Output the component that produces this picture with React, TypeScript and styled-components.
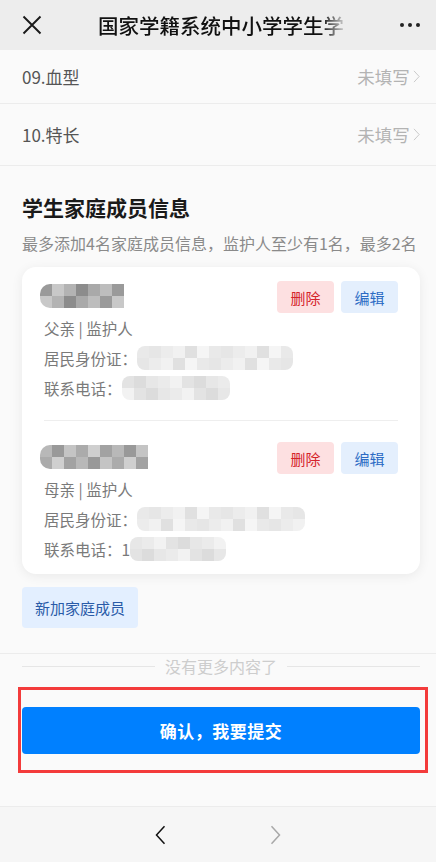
import styled, { createGlobalStyle } from "styled-components";

const GlobalStyle = createGlobalStyle`
  * { box-sizing: border-box; }
  html, body { margin: 0; padding: 0; }
  body {
    font-family: "Noto Sans CJK SC", "Noto Sans", sans-serif;
    background: #fafafa;
    color: #222;
  }
`;

type MosaicProps = { cols: number; rows: number; cell: number; shades: string[]; seed: number };

function Mosaic({ cols, rows, cell, shades, seed }: MosaicProps) {
  const cells = [];
  let s = seed;
  for (let r = 0; r < rows; r++) {
    for (let c = 0; c < cols; c++) {
      s = (s * 9301 + 49297) % 233280;
      const shade = shades[s % shades.length];
      cells.push(<rect key={`${r}-${c}`} x={c * cell} y={r * cell} width={cell} height={cell} fill={shade} />);
    }
  }
  return (
    <MosaicSvg width={cols * cell} height={rows * cell} viewBox={`0 0 ${cols * cell} ${rows * cell}`}>
      {cells}
    </MosaicSvg>
  );
}

const Chevron = ({ color, size = 12, dir = "right" }: { color: string; size?: number; dir?: "left" | "right" }) => (
  <svg width={size * 0.55} height={size} viewBox="0 0 6 12" fill="none">
    <path
      d={dir === "right" ? "M0.6 0.8 L5.4 6 L0.6 11.2" : "M5.4 0.8 L0.6 6 L5.4 11.2"}
      stroke={color}
      strokeWidth="0.9"
    />
  </svg>
);

const members = [
  {
    nameCols: 7, nameShades: ["#a9a9a9", "#bdbdbd", "#9a9a9a", "#c8c8c8", "#b3b3b3", "#8c8c8c"],
    relation: "父亲 | 监护人", phonePrefix: "", seed: 7, idCols: 13, phoneCols: 9,
  },
  {
    nameCols: 9, nameShades: ["#cfcfcf", "#a2a2a2", "#b8b8b8", "#999", "#c4c4c4", "#ababab"],
    relation: "母亲 | 监护人", phonePrefix: "1", seed: 31, idCols: 14, phoneCols: 8,
  },
];

const idShades = ["#e6e6e6", "#ececec", "#f1f1f1", "#e0e0e0", "#f5f5f5", "#e9e9e9"];
const phoneShades = ["#e3e3e3", "#ebebeb", "#dcdcdc", "#f2f2f2", "#e7e7e7"];

export default function App() {
  return (
    <>
      <GlobalStyle />
      <Page>
        <TopBar>
          <IconSlot>
            <svg width="20" height="20" viewBox="0 0 20 20">
              <path d="M1.5 1.5 L18.5 18.5 M18.5 1.5 L1.5 18.5" stroke="#1a1a1a" strokeWidth="1.9" />
            </svg>
          </IconSlot>
          <Title>国家学籍系统中小学学生学</Title>
          <Dots>
            <i /><i /><i />
          </Dots>
        </TopBar>

        <Content>
          <FieldRow $h={54}>
            <FieldLabel>09.血型</FieldLabel>
            <FieldValue>未填写<Chevron color="#c8c8c8" size={13} /></FieldValue>
          </FieldRow>
          <FieldRow $h={62}>
            <FieldLabel>10.特长</FieldLabel>
            <FieldValue>未填写<Chevron color="#c8c8c8" size={13} /></FieldValue>
          </FieldRow>

          <Section>
            <SectionTitle>学生家庭成员信息</SectionTitle>
            <SectionHint>最多添加4名家庭成员信息，监护人至少有1名，最多2名</SectionHint>
            <Card>
              {members.map((m, i) => (
                <Member key={i} $first={i === 0}>
                  <MemberHead>
                    <NameBlur>
                      <Mosaic cols={m.nameCols} rows={2} cell={12} shades={m.nameShades} seed={m.seed} />
                    </NameBlur>
                    <Actions>
                      <SmallButton $tone="danger">删除</SmallButton>
                      <SmallButton $tone="primary">编辑</SmallButton>
                    </Actions>
                  </MemberHead>
                  <InfoLine>{m.relation}</InfoLine>
                  <InfoLine>
                    居民身份证：
                    <Mosaic cols={m.idCols} rows={2} cell={12} shades={idShades} seed={m.seed + 3} />
                  </InfoLine>
                  <InfoLine>
                    联系电话：{m.phonePrefix}
                    <Mosaic cols={m.phoneCols} rows={2} cell={12} shades={phoneShades} seed={m.seed + 11} />
                  </InfoLine>
                </Member>
              ))}
            </Card>
            <AddButton>新加家庭成员</AddButton>
          </Section>

          <EndNote>
            <span>没有更多内容了</span>
          </EndNote>

          <SubmitArea>
            <SubmitButton>确认，我要提交</SubmitButton>
            <Highlight />
          </SubmitArea>
        </Content>

        <BottomNav>
          <NavArrow><Chevron color="#111" size={20} dir="left" /></NavArrow>
          <NavArrow><Chevron color="#a8a8a8" size={20} /></NavArrow>
        </BottomNav>
      </Page>
    </>
  );
}

const Page = styled.div`
  display: flex;
  flex-direction: column;
  height: 100vh;
  overflow: hidden;
  background: #fafafa;
`;

const TopBar = styled.header`
  flex: 0 0 50px;
  display: flex;
  align-items: center;
  background: #ededed;
  padding: 0 16px 0 22px;
`;

const IconSlot = styled.div`
  width: 20px;
  height: 20px;
  display: flex;
`;

const Title = styled.h1`
  margin: 0 0 0 56px;
  font-size: 20.5px;
  font-weight: 500;
  color: #111;
  white-space: nowrap;
  -webkit-mask-image: linear-gradient(to right, #000 91%, rgba(0, 0, 0, 0.15) 100%);
  mask-image: linear-gradient(to right, #000 91%, rgba(0, 0, 0, 0.15) 100%);
`;

const Dots = styled.div`
  margin-left: auto;
  display: flex;
  gap: 4px;

  i {
    width: 4px;
    height: 4px;
    border-radius: 50%;
    background: #222;
  }
`;

const Content = styled.main`
  flex: 1;
  display: flex;
  flex-direction: column;
`;

const FieldRow = styled.div<{ $h: number }>`
  height: ${(p) => p.$h}px;
  display: flex;
  align-items: center;
  justify-content: space-between;
  padding: 0 16px 0 22px;
  border-bottom: 1px solid #ececec;
  font-size: 17px;
`;

const FieldLabel = styled.span`
  color: #555;
`;

const FieldValue = styled.span`
  display: flex;
  align-items: center;
  gap: 3px;
  font-size: 17.5px;
  color: #b3b3b3;
`;

const Section = styled.section`
  padding: 29px 16px 25px 22px;
  border-bottom: 1px solid #ececec;
`;

const SectionTitle = styled.h2`
  margin: 0;
  font-size: 21px;
  line-height: 24px;
  font-weight: 700;
  color: #1a1a1a;
`;

const SectionHint = styled.p`
  margin: 12px 0 0;
  font-size: 16px;
  line-height: 24px;
  color: #8a8a8a;
  white-space: nowrap;
`;

const Card = styled.div`
  margin-top: 12px;
  background: #fff;
  border-radius: 14px;
  box-shadow: 0 2px 12px rgba(0, 0, 0, 0.07);
  padding: 0 22px;
`;

const Member = styled.div<{ $first: boolean }>`
  padding: ${(p) => (p.$first ? "14px 0 18px" : "21px 0 11px")};
  border-top: ${(p) => (p.$first ? "none" : "1px solid #eeeeee")};
`;

const MemberHead = styled.div`
  display: flex;
  align-items: flex-start;
  justify-content: space-between;
`;

const NameBlur = styled.div`
  padding-top: 3px;
  margin-left: -4px;

  svg {
    border-radius: 10px 0 0 10px;
    filter: blur(0.4px);
  }
`;

const Actions = styled.div`
  display: flex;
  gap: 7px;
`;

const SmallButton = styled.button<{ $tone: "danger" | "primary" }>`
  width: 57px;
  height: 32px;
  border: none;
  border-radius: 4px;
  font-family: inherit;
  font-size: 15px;
  background: ${(p) => (p.$tone === "danger" ? "#fde0e1" : "#e4effd")};
  color: ${(p) => (p.$tone === "danger" ? "#d4242b" : "#2c6bc4")};
`;

const InfoLine = styled.div`
  display: flex;
  align-items: center;
  height: 29px;
  font-size: 15.5px;
  color: #7a7a7a;
  margin-top: 1px;

  &:nth-child(2) {
    margin-top: 0;
  }
`;

const MosaicSvg = styled.svg`
  display: block;
  border-radius: 8px;
  flex-shrink: 0;
`;

const AddButton = styled.button`
  margin-top: 13px;
  width: 116px;
  height: 41px;
  border: none;
  border-radius: 4px;
  background: #e3efff;
  color: #2a5ba8;
  font-family: inherit;
  font-size: 15px;
`;

const EndNote = styled.div`
  display: flex;
  align-items: center;
  gap: 10px;
  height: 24px;
  padding: 0 16px 0 22px;
  font-size: 16px;
  color: #cdcdcd;

  &::before,
  &::after {
    content: "";
    flex: 1;
    height: 1px;
    background: #e6e6e6;
  }
`;

const SubmitArea = styled.div`
  position: relative;
  margin-top: 9px;
  padding: 20px 16px 19px 22px;
`;

const SubmitButton = styled.button`
  display: block;
  width: 100%;
  height: 47px;
  border: none;
  border-radius: 4px;
  background: #0080ff;
  color: #fff;
  font-family: inherit;
  font-size: 17px;
  font-weight: 700;
  letter-spacing: 0.5px;
`;

const Highlight = styled.div`
  position: absolute;
  top: 0;
  bottom: 0;
  left: 18px;
  right: 8px;
  border: 3px solid #f33b3b;
  pointer-events: none;
`;

const BottomNav = styled.nav`
  flex: 0 0 56px;
  display: flex;
  align-items: center;
  justify-content: center;
  gap: 104px;
  background: #f6f6f6;
  border-top: 1px solid #ececec;
`;

const NavArrow = styled.span`
  display: flex;
  width: 11px;
  justify-content: center;
`;
